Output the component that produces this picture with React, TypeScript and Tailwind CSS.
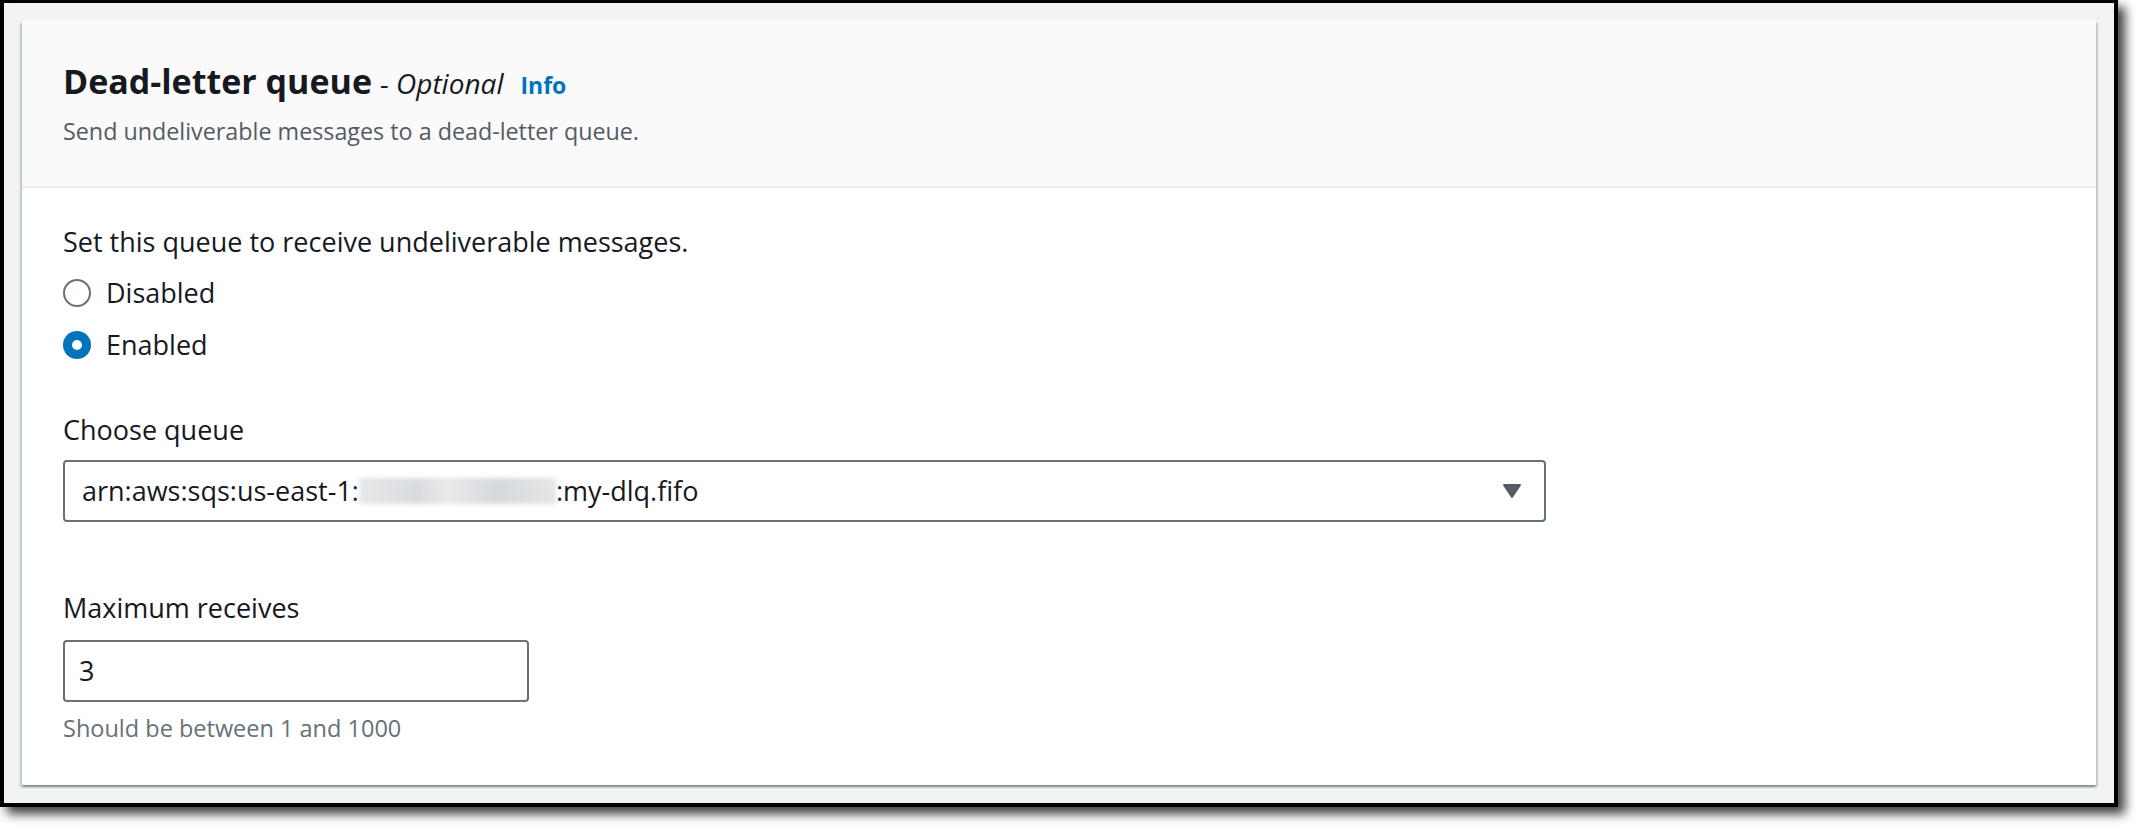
import React from "react";

const font = "font-['Open_Sans','Noto_Sans',sans-serif]";

function Radio({ checked, label }: { checked?: boolean; label: string }) {
  return (
    <div className="flex h-[44px] items-center">
      {checked ? (
        <span className="flex size-[28px] items-center justify-center rounded-full bg-[#0073bb]">
          <span className="size-[10px] rounded-full bg-white" />
        </span>
      ) : (
        <span className="size-[28px] rounded-full border-[2.5px] border-[#687078] bg-white" />
      )}
      <span className="ml-[15px] text-[27px] leading-[44px] text-[#16191f]">{label}</span>
    </div>
  );
}

export default function App() {
  return (
    <div className={`${font} h-[828px] w-[2138px] bg-white`}>
      <div className="h-[807px] w-[2118px] border-x-4 border-b-4 border-t-[3px] border-black bg-[#f2f3f3] p-[18px] shadow-[7px_7px_10px_rgba(0,0,0,0.75)]">
        <div className="bg-white shadow-[0_2px_2px_rgba(0,28,36,0.3),2px_2px_2px_rgba(0,28,36,0.15),-2px_2px_2px_rgba(0,28,36,0.15)]">
          {/* header */}
          <div className="border-b-2 border-[#eaeded] bg-[#fafafa] px-[41px] pt-[38px] pb-[39px]">
            <div className="flex h-[44px] items-baseline">
              <h2 className="text-[34px] font-bold leading-[44px] text-[#16191f]">Dead-letter queue</h2>
              <span className="ml-[8px] text-[28px] italic leading-[44px] text-[#16191f]">- Optional</span>
              <a className="ml-[17px] text-[23px] font-bold leading-[44px] text-[#0073bb]">Info</a>
            </div>
            <p className="mt-[12px] text-[23.3px] leading-[32px] text-[#545b64]">
              Send undeliverable messages to a dead-letter queue.
            </p>
          </div>

          {/* body */}
          <div className="px-[41px] pt-[32px] pb-[41px] text-[27px] leading-[44px] text-[#16191f]">
            <p>Set this queue to receive undeliverable messages.</p>
            <div className="mt-[7px] flex flex-col gap-[8px]">
              <Radio label="Disabled" />
              <Radio checked label="Enabled" />
            </div>

            <p className="mt-[41px]">Choose queue</p>
            <div className="mt-[8px] flex h-[62px] w-[1483px] items-center justify-between rounded-[4px] border-2 border-[#687078] bg-white pl-[17px] pr-[22px]">
              <span className="flex items-center whitespace-nowrap">
                arn:aws:sqs:us-east-1:
                <span className="inline-block h-[26px] w-[197px] bg-[linear-gradient(90deg,#e6e8ea,#d9dcdf_30%,#e8eaec_45%,#d6d9dc_70%,#e4e6e8)] blur-[2px]" />
                :my-dlq.fifo
              </span>
              <svg width="20" height="16" viewBox="0 0 20 16" aria-hidden="true">
                <path d="M2 2 H18 L10 14 Z" fill="#545b64" stroke="#545b64" strokeWidth="2" strokeLinejoin="round" />
              </svg>
            </div>

            <p className="mt-[64px]">Maximum receives</p>
            <div className="mt-[10px] flex h-[62px] w-[466px] items-center rounded-[4px] border-2 border-[#687078] bg-white pl-[14px]">
              3
            </div>
            <p className="mt-[10px] text-[23.5px] leading-[32px] text-[#687078]">Should be between 1 and 1000</p>
          </div>
        </div>
      </div>
    </div>
  );
}
